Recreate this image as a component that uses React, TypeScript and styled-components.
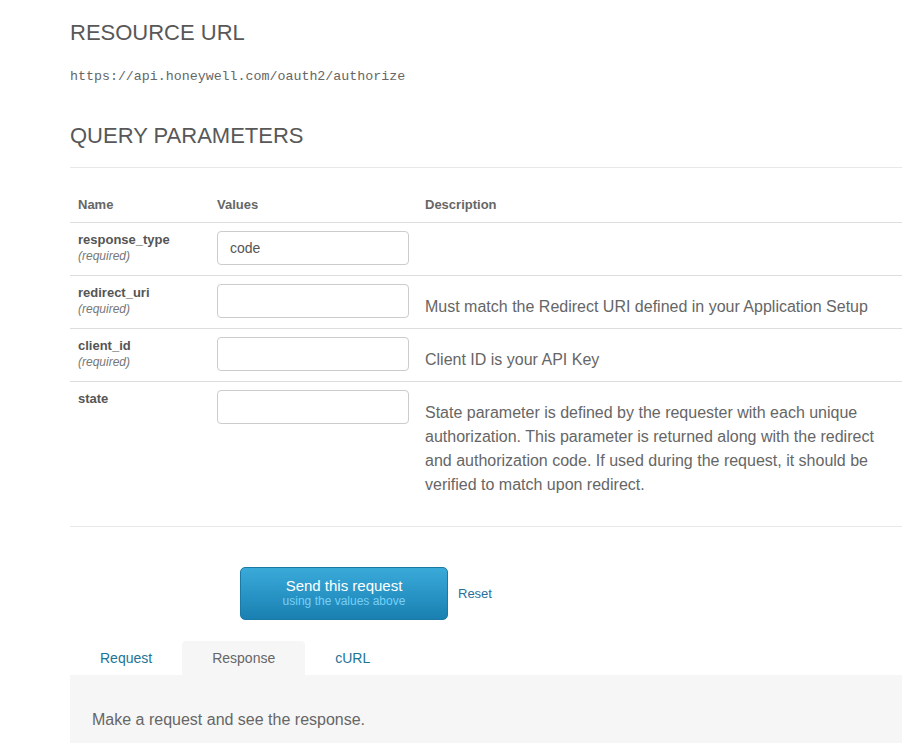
import React, { useState } from 'react';
import styled, { createGlobalStyle } from 'styled-components';

const GlobalStyle = createGlobalStyle`
  html, body {
    margin: 0;
    padding: 0;
    background: #ffffff;
  }
  body {
    font-family: "Liberation Sans", Arial, sans-serif;
    color: #555555;
  }
  * {
    box-sizing: border-box;
  }
`;

type Param = {
  name: string;
  required: boolean;
  value: string;
  description?: string;
};

const params: Param[] = [
  { name: 'response_type', required: true, value: 'code' },
  {
    name: 'redirect_uri',
    required: true,
    value: '',
    description: 'Must match the Redirect URI defined in your Application Setup',
  },
  {
    name: 'client_id',
    required: true,
    value: '',
    description: 'Client ID is your API Key',
  },
  {
    name: 'state',
    required: false,
    value: '',
    description:
      'State parameter is defined by the requester with each unique authorization. This parameter is returned along with the redirect and authorization code. If used during the request, it should be verified to match upon redirect.',
  },
];

const tabs = ['Request', 'Response', 'cURL'];

export default function App() {
  const [values, setValues] = useState<string[]>(params.map((p) => p.value));
  const [activeTab, setActiveTab] = useState('Response');

  const handleChange = (index: number, value: string) => {
    setValues((prev) => prev.map((v, i) => (i === index ? value : v)));
  };

  return (
    <>
      <GlobalStyle />
      <S.Page>
        <S.SectionTitle>RESOURCE URL</S.SectionTitle>
        <S.ResourceUrl>https://api.honeywell.com/oauth2/authorize</S.ResourceUrl>

        <S.SectionTitle $spaced>QUERY PARAMETERS</S.SectionTitle>
        <S.Divider />

        <S.ParamTable>
          <colgroup>
            <col style={{ width: 139 }} />
            <col style={{ width: 208 }} />
            <col />
          </colgroup>
          <thead>
            <tr>
              <S.HeadCell>Name</S.HeadCell>
              <S.HeadCell>Values</S.HeadCell>
              <S.HeadCell>Description</S.HeadCell>
            </tr>
          </thead>
          <tbody>
            {params.map((param, index) => (
              <S.ParamRow key={param.name}>
                <S.NameCell>
                  <S.ParamName>{param.name}</S.ParamName>
                  {param.required && <S.Required>(required)</S.Required>}
                </S.NameCell>
                <S.ValueCell>
                  <S.ValueInput
                    value={values[index]}
                    onChange={(e) => handleChange(index, e.target.value)}
                  />
                </S.ValueCell>
                <S.DescriptionCell>{param.description}</S.DescriptionCell>
              </S.ParamRow>
            ))}
          </tbody>
        </S.ParamTable>

        <S.Divider $bottom />

        <S.ActionRow>
          <S.SendButton>
            <S.SendLabel>Send this request</S.SendLabel>
            <S.SendHint>using the values above</S.SendHint>
          </S.SendButton>
          <S.ResetLink href="#">Reset</S.ResetLink>
        </S.ActionRow>

        <S.TabBar>
          {tabs.map((tab) => (
            <S.Tab
              key={tab}
              $active={activeTab === tab}
              onClick={() => setActiveTab(tab)}>
              {tab}
            </S.Tab>
          ))}
        </S.TabBar>
        <S.TabPanel>Make a request and see the response.</S.TabPanel>
      </S.Page>
    </>
  );
}

const S = {
  Page: styled.div`
    width: 832px;
    margin-left: 70px;
    padding-top: 21px;
  `,
  SectionTitle: styled.h2<{ $spaced?: boolean }>`
    margin: ${(props) => (props.$spaced ? '37px' : '0')} 0 0;
    font-size: 22px;
    line-height: 24px;
    font-weight: 400;
    color: #585858;
  `,
  ResourceUrl: styled.div`
    margin-top: 22px;
    font-family: "Liberation Mono", "Courier New", monospace;
    font-size: 13.3px;
    line-height: 20px;
    color: #666666;
  `,
  Divider: styled.hr<{ $bottom?: boolean }>`
    margin: ${(props) => (props.$bottom ? '19px 0 0' : '19px 0 0')};
    border: 0;
    border-top: 1px solid #e8e8e8;
    height: 0;
  `,
  ParamTable: styled.table`
    width: 100%;
    border-collapse: collapse;
    table-layout: fixed;
  `,
  HeadCell: styled.th`
    text-align: left;
    vertical-align: bottom;
    padding: 29px 8px 9px;
    font-size: 13px;
    line-height: 16px;
    font-weight: 700;
    color: #666666;
    border-bottom: 1px solid #dddddd;
  `,
  ParamRow: styled.tr`
    border-top: 1px solid #dddddd;
    &:first-child {
      border-top: 0;
    }
  `,
  NameCell: styled.td`
    vertical-align: top;
    padding: 8px 8px 10px;
  `,
  ParamName: styled.div`
    font-size: 13px;
    line-height: 17px;
    font-weight: 700;
    color: #555555;
  `,
  Required: styled.div`
    font-size: 12px;
    line-height: 17px;
    font-style: italic;
    color: #777777;
  `,
  ValueCell: styled.td`
    vertical-align: top;
    padding: 8px 8px 10px;
  `,
  ValueInput: styled.input`
    display: block;
    width: 192px;
    height: 34px;
    padding: 6px 12px;
    font-family: "Liberation Sans", Arial, sans-serif;
    font-size: 14px;
    color: #555555;
    border: 1px solid #cccccc;
    border-radius: 4px;
    background: #ffffff;
    outline: none;
  `,
  DescriptionCell: styled.td`
    vertical-align: top;
    padding: 19px 8px 9px;
    font-size: 16px;
    line-height: 24px;
    color: #666666;
    tr:last-child > & {
      padding-bottom: 10px;
    }
  `,
  ActionRow: styled.div`
    display: flex;
    align-items: center;
    gap: 10px;
    margin-top: 40px;
    padding-left: 170px;
  `,
  SendButton: styled.button`
    width: 208px;
    height: 53px;
    display: flex;
    flex-direction: column;
    align-items: center;
    justify-content: center;
    padding: 0 0 2px;
    border: 1px solid #1a7aa6;
    border-radius: 5px;
    background: linear-gradient(to bottom, #3aaad9 0%, #2793c4 55%, #1a80b1 100%);
    font-family: "Liberation Sans", Arial, sans-serif;
    cursor: pointer;
  `,
  SendLabel: styled.span`
    font-size: 15px;
    line-height: 17px;
    color: #ffffff;
  `,
  SendHint: styled.span`
    font-size: 12px;
    line-height: 14px;
    color: #76d0f7;
  `,
  ResetLink: styled.a`
    font-size: 13px;
    color: #2a6f9b;
    text-decoration: none;
  `,
  TabBar: styled.div`
    display: flex;
    margin-top: 21px;
  `,
  Tab: styled.button<{ $active: boolean }>`
    height: 34px;
    padding: 0 30px;
    border: 0;
    border-radius: 4px 4px 0 0;
    background: ${(props) => (props.$active ? '#f6f6f6' : 'transparent')};
    color: ${(props) => (props.$active ? '#666666' : '#1d7494')};
    font-family: "Liberation Sans", Arial, sans-serif;
    font-size: 14px;
    line-height: 34px;
    cursor: pointer;
  `,
  TabPanel: styled.div`
    background: #f6f6f6;
    padding: 33px 22px 20px;
    min-height: 80px;
    font-size: 16px;
    line-height: 24px;
    color: #666666;
  `,
};
